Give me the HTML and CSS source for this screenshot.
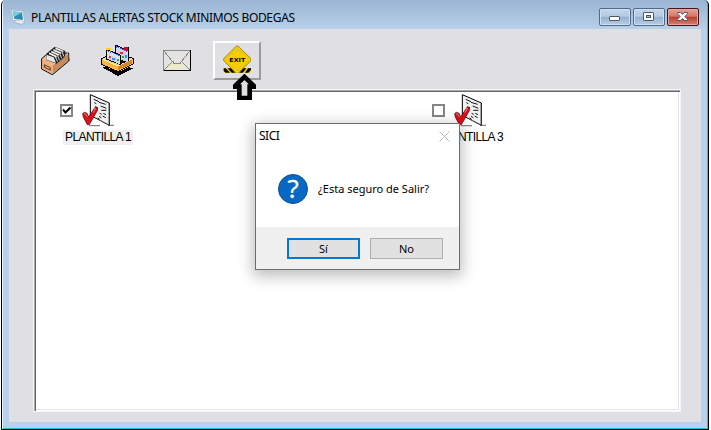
FILE: index.html
```html
<!DOCTYPE html>
<html lang="es">
<head>
<meta charset="utf-8">
<title>PLANTILLAS ALERTAS STOCK MINIMOS BODEGAS</title>
<link rel="stylesheet" href="styles.css">
</head>
<body>
<svg class="defs" width="0" height="0">
  <symbol id="document" viewBox="156 24 102 102">
    <path d="M177 122h33M234 121h18" stroke="#888" stroke-width="4"/>
    <path d="M181 29l57 25v67l-57-30z" fill="#f1f1f1" stroke="#000" stroke-width="3"/>
    <path d="M236 56v62M184 92l51 27" stroke="#777" stroke-width="3" stroke-dasharray="3 3"/>
    <path d="M191 43l16 7m-14 3 6 3m8-4 20 6m-32 7 9 4m8-6 17 7m-15 6h15m-20 9 6 3m5-3 8 4m-21 5 7 4m4-5 9 5m-24 1 6 4" fill="none" stroke="#111" stroke-width="3"/>
    <path d="M158 86l5-4 8 3 5 10 20-29 7 2-1 9-24 42h-6l-12-22z" fill="#d90f1d" stroke="#500" stroke-width="2"/>
    <path d="M162 87l6 1 4 8M193 71l4-1-8 13" fill="none" stroke="#ff7777" stroke-width="3"/>
  </symbol>
</svg>
<main class="window">
  <header class="titlebar">
    <svg class="app-icon" viewBox="36 27 45 48">
      <path d="M46 62l24-2 7 7-9 6-18-5z" fill="#f4f2ee" stroke="#858a90" stroke-width="1.5"/>
      <path d="M37 30l35 4 4 30-33-3z" fill="#fff" stroke="#9aa9b8" stroke-width="1.5"/>
      <path d="M41 34l28 3 3 23-26-3z" fill="#2c8eb1"/>
      <path d="M41 34l28 3-24 14z" fill="#77cede"/>
    </svg>
    <h1>PLANTILLAS ALERTAS STOCK MINIMOS BODEGAS</h1>
    <div class="controls">
      <button aria-label="Minimizar"><svg viewBox="0 0 32 18"><rect x="10.5" y="8.5" width="10" height="4" rx=".5" fill="#fff" stroke="#535666"/></svg></button>
      <button aria-label="Maximizar"><svg viewBox="0 0 32 18"><rect x="10.5" y="4.5" width="10" height="8" rx=".5" fill="#fff" stroke="#535666"/><rect x="13.5" y="7.5" width="4" height="2" fill="#a1bad6" stroke="#535666"/></svg></button>
      <button class="close" aria-label="Cerrar"><svg viewBox="0 0 32 18"><path d="M10.500 4.500h3.200l1.800 2 1.800-2h3.200v1.200L17.800 8.500l2.700 2.800v1.200h-3.200l-1.800-2-1.800 2h-3.200v-1.200l2.700-2.800-2.700-2.800z" fill="#fff" stroke="#535666"/></svg></button>
    </div>
  </header>
  <section class="client">
    <nav class="toolbar">
      <svg class="tool" viewBox="30 24 96 96">
        <path d="M68 118l52-44V67l-5-3-49 46z" fill="#999"/>
        <path d="M35 68l14-12 67-5v24l-49 41-32-17z" fill="#f2b889" stroke="#000" stroke-width="3"/>
        <path d="M68 87l47-34v21l-47 40z" fill="#c58b5d"/>
        <path d="M37 70l30 16v28l-30-16z" fill="#eeb080"/>
        <path d="M68 86l46-34" stroke="#ffd7b3" stroke-width="2.5"/>
        <path d="M74 32l32 13v16L80 83l-32-11V54z" fill="#222"/>
        <path d="M76 34l24 10v5L76 40zM70 39l23 10v5L70 45zM64 44l23 10v5L64 50zM57 49l23 10v6L57 55z" fill="#eee"/>
        <path d="M49 56l22 8 7 17-29-10z" fill="#e5e5e5"/>
        <path d="M76 63l7 14M82 58l7 15M89 53l6 14M96 48l6 14" stroke="#ddd" stroke-width="3"/>
        <path d="M43 86l18 9v8l-18-9z" fill="#b5784b" stroke="#69462d" stroke-width="3"/>
        <path d="M47 92l10 5" stroke="#ffe1c0" stroke-width="2"/>
      </svg>
      <svg class="tool" viewBox="212 21 99 99" shape-rendering="crispEdges">
        <path d="M216 94h14l32 15 35-16 11 5-45 22z" fill="#000"/>
        <path d="M214 68l31-16 63 15v17l-45 23-49-22z" fill="#ffc35c" stroke="#000" stroke-width="3"/>
        <path d="M216 71l47 21v13l-47-21z" fill="#fdb444"/><path d="M263 91l43-21v12l-43 22z" fill="#d28a20"/>
        <path d="M218 70l45 20 42-22" fill="none" stroke="#fff0c0" stroke-width="3"/>
        <path d="M226 40v-3h14v7l13 4V27h6l21 9v-3h15v43l-24 8v3l-45-17z" fill="#000"/>
        <path d="M256 30l36 14v34l-19-6V57l-17-8z" fill="#d5d6e5"/>
        <path d="M230 43l40 17v25l-40-17z" fill="#dfe0ed"/>
        <path d="M226 36h15v8l-13-3z" fill="#ffd400"/><path d="M281 34h13v12l-13-5z" fill="#e00020"/>
        <path d="M231 44l38 16M256 32l35 14" stroke="#5555f2" stroke-width="3" stroke-dasharray="5 2"/>
        <path d="M237 55v14m9-10v14m9-10v14m-23-12 36 14M264 45v8m8-6v17m9-12v21" stroke="#b9bad0" stroke-width="2"/>
        <path d="M235 59h8v6h-8zM270 47h7v6h-7z" fill="#ee3045"/><path d="M246 65h8v6h-8zM284 58h6v7h-6z" fill="#249cf4"/><path d="M260 69h7v7h-7zM274 59h7v6h-7z" fill="#27b04c"/>
      </svg>
      <svg class="tool envelope" viewBox="39 42 84 63" shape-rendering="crispEdges">
        <path d="M40.500 43.500h80v60h-80z" fill="#e4e3e1" stroke="#888" stroke-width="3"/>
        <path d="M67 78l13 4 14-4 24 23H45z" fill="#e9e7d5"/>
        <path d="M54 91v9m6-15v15m6-20v21m6-20v20m6-18v18m6-17v16m6-18v18m6-20v21m6-15v15m6-9v9" stroke="#fff8a0" stroke-width="2" stroke-dasharray="2 4"/>
        <path d="M42 45l29 36h20l28-36M42 102l28-27m24 0 25 27" fill="none" stroke="#888" stroke-width="3"/>
        <path d="M42 103.500h79.500V43" fill="none" stroke="#000" stroke-width="3"/>
      </svg>
      <button class="exit" aria-label="Salir">
        <svg viewBox="219 27 84 84">
          <path d="M221 97h82v13h-82z" fill="#f5ce00"/><path d="M221 97h6l13 13h-13l-6-5zM233 97h10l12 13h-10zM268 110l11-13h10l-11 13zM294 97h9v4l-8 9h-10z" fill="#000"/>
          <path d="M259 30h5l39 38v6l-39 38h-5l-38-38v-6z" fill="#f5cd00" stroke="#70621b" stroke-width="2"/>
          <path d="M261 35l37 36-37 35-36-35z" fill="none" stroke="#d0ae00" stroke-width="1"/>
          <circle cx="261" cy="44" r="3" fill="#bbb"/><circle cx="261" cy="99" r="3" fill="#bbb"/>
          <text x="238" y="77" textLength="48" lengthAdjust="spacingAndGlyphs">EXIT</text>
        </svg>
      </button>
      <svg class="pointer" viewBox="243 114 81 78"><path d="M283.500 122.500L311 149v3h-12v34h-31v-34H256v-3z" fill="#e0dfe3" stroke="#000" stroke-width="14"/></svg>
    </nav>
    <section class="list">
      <article class="item">
        <div class="item-row"><span class="check"><svg viewBox="0 0 13 13"><path d="M3 5.500l2.500 3 5-5" fill="none" stroke="#000" stroke-width="2"/></svg></span><svg class="document"><use href="#document"/></svg></div>
        <p class="selected">PLANTILLA 1</p>
      </article>
      <article class="item">
        <div class="item-row"><span class="check"></span><svg class="document"><use href="#document"/></svg></div>
        <p>PLANTILLA 3</p>
      </article>
    </section>
  </section>
  <section class="dialog" role="dialog">
    <header><h2>SICI</h2><svg viewBox="0 0 11 11"><path d="M.5.5l10 10m0-10-10 10" stroke="#bbb"/></svg></header>
    <div class="message"><span class="question">?</span><p>¿Esta seguro de Salir?</p></div>
    <footer><button class="default">Sí</button><button>No</button></footer>
  </section>
</main>
</body>
</html>
```
FILE: styles.css
```css
* { box-sizing: border-box; }
body { margin: 0; width: 711px; height: 430px; overflow: hidden; background: #fff; color: #000; font: 12px "Noto Sans", sans-serif; }
button { margin: 0; padding: 0; font: inherit; }
h1, h2, p { margin: 0; font-size: 12px; font-weight: 400; white-space: nowrap; }
svg { display: block; flex: none; }
.defs { position: absolute; }
.window { position: relative; width: 708px; height: 430px; margin-left: 1px; padding: 0 7px 7px; border: 1px solid #000; border-top: 0; border-radius: 5px 5px 0 0; background: linear-gradient(#9ab5d2, #b8d0e9 29px, #b9d1ea); box-shadow: inset 1px 0 #edf6fd, inset -1px -1px #20c2dc; }
.titlebar { display: flex; align-items: center; height: 29px; padding: 5px 2px 0 2px; }
.app-icon { width: 15px; height: 16px; margin-right: 5px; }
.titlebar h1 { padding-top: 1px; line-height: 22px; letter-spacing: -.32px; }
.controls { display: flex; gap: 2px; margin-left: auto; }
.controls button { width: 32px; height: 18px; border: 1px solid #53698a; border-radius: 2px; background: linear-gradient(#c4d7eb, #b3cae3 46%, #95b1d0 50%, #b5cee7); box-shadow: inset 0 0 0 1px #cfe0f2; }
.controls svg { width: 32px; height: 18px; margin: -1px; }
.controls .close { border-color: #431421; background: linear-gradient(#e6a397, #d27768 46%, #b63d2b 50%, #d58473); box-shadow: inset 0 0 0 1px #eba697; }
.client { height: 393px; padding: 0 20px 8px 24px; background: #e0dfe3; }
.toolbar { position: relative; display: flex; height: 60px; padding: 12px 0 0 7px; }
.tool { width: 32px; height: 32px; margin: 3px 29px 0 0; }
.tool + .tool { width: 33px; height: 33px; margin: 2px 29px 0 0; }
.tool + .envelope { width: 28px; height: 21px; margin: 9px 22px 0 0; }
.exit { display: flex; align-items: flex-start; width: 48px; height: 39px; border: solid; border-width: 2px; border-color: #fff #9b9b9e #9b9b9e #fff; background: #e0dfe3; padding: 2px 0 0 8px; }
.exit svg { width: 28px; height: 28px; }
.exit text { font: bold 17px "DejaVu Sans", sans-serif; }
.pointer { position: absolute; left: 198px; top: 45px; width: 27px; height: 26px; z-index: 1; }
.list { display: grid; grid-template-columns: 372px 1fr; width: 648px; height: 323px; border: 1px solid #f6f6f6; background: #fff; box-shadow: inset 1px 1px #aaa, inset 2px 2px #666, inset -1px -1px #fff, inset -2px -2px #e3e3e3; padding: 3px 0 0 25px; }
.item-row { display: flex; height: 37px; }
.check { width: 13px; height: 13px; margin: 11px 9px 0 1px; border: 2px solid #858585; }
.check svg { width: 13px; height: 13px; margin: -2px; }
.document { width: 34px; height: 34px; }
.item p { width: 70px; height: 15px; margin-left: 4px; padding-left: 2px; font: 12px/15px "Liberation Sans", sans-serif; letter-spacing: -.6px; }
.item .selected { background: #f0f0f0; }
.dialog { position: absolute; left: 253px; top: 123px; width: 205px; height: 147px; border: 1px solid #6d6d6d; background: #fff; box-shadow: 0 4px 14px 2px #0004; z-index: 2; }
.dialog header { display: flex; justify-content: space-between; height: 27px; padding: 0 9px 0 3px; }
.dialog h2 { line-height: 23px; letter-spacing: -.5px; }
.dialog header svg { width: 11px; height: 11px; margin-top: 7px; }
.message { display: flex; align-items: center; height: 76px; padding: 0 0 1px 22px; }
.question { width: 30px; height: 30px; border: 1px solid #075290; border-radius: 50%; background: #0868c4; color: #fff; font: 26px/27px "Open Sans", sans-serif; text-align: center; -webkit-text-stroke: .4px #fff; }
.message p { margin-left: 10px; font-size: 11px; }
.dialog footer { display: flex; gap: 10px; height: 42px; padding: 11px 16px 0 31px; background: #f0f0f0; }
.dialog footer button { width: 73px; height: 21px; border: 1px solid #adadad; background: #e1e1e1; color: #000; font-size: 11px; line-height: 18px; }
.dialog footer .default { border: 2px solid #0078d7; line-height: 16px; }
```
